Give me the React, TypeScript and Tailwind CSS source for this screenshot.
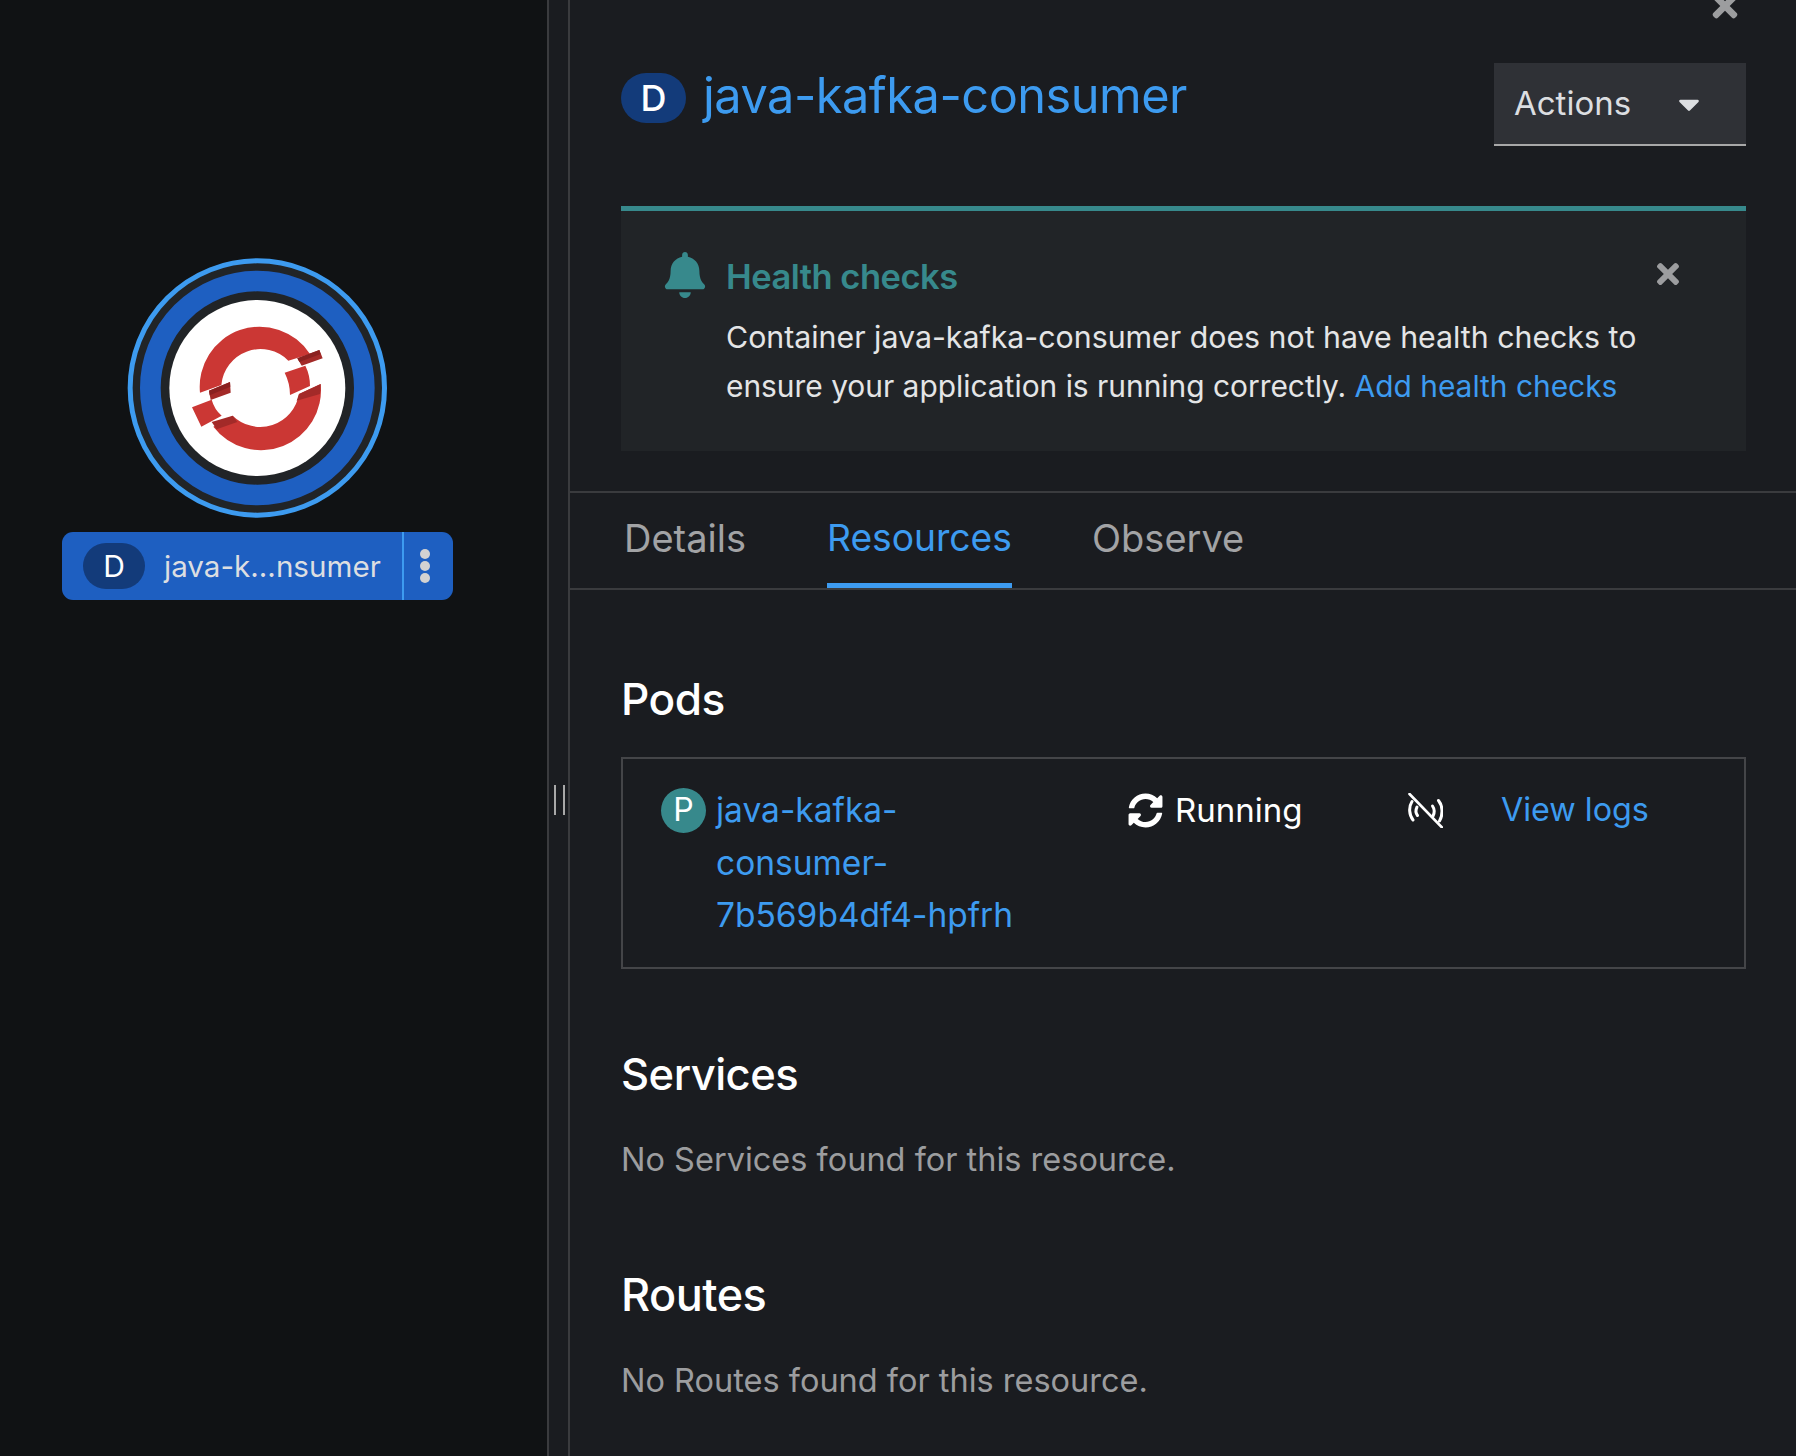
import { FaBell, FaCaretDown, FaSyncAlt, FaTimes } from "react-icons/fa";

function TopologyNode() {
  return (
    <svg width="280" height="280" viewBox="0 0 840 840" className="ml-[58px] block self-start">
      <circle cx="412" cy="414" r="381.5" fill="#212427" stroke="#3d9bf0" strokeWidth="15" />
      <circle cx="412" cy="414" r="321" fill="none" stroke="#1e5fc1" strokeWidth="62" />
      <circle cx="412" cy="414" r="264" fill="#fff" />
      <path d="M240 428 A180 180 0 0 1 570 312 L505 332 A118 118 0 0 0 304 405 Z" fill="#cb3734" />
      <path d="M602 402 A180 180 0 0 1 280 530 L338 497 A118 118 0 0 0 537 432 Z" fill="#cb3734" />
      <path d="M494 368 L556 347 Q570 375 570 408 L510 435 Q510 400 494 368 Z" fill="#cb3734" />
      <path d="M216 472 L275 449 Q283 478 305 497 L244 530 Z" fill="#cb3734" />
      <path d="M267 422 L330 396 L332 428 L272 450 Z" fill="#a32a28" />
      <path d="M267 422 L330 396 L331 410 L269 436 Z" fill="#8a2120" />
      <path d="M532 325 L598 300 L608 325 L545 347 Z" fill="#a32a28" />
      <path d="M532 325 L598 300 L602 312 L538 336 Z" fill="#8a2120" />
      <path d="M537 432 L602 402 L600 432 L530 452 Z" fill="#a32a28" />
      <path d="M275 516 L338 497 L352 516 L290 538 Z" fill="#a32a28" />
    </svg>
  );
}

function UnreachableIcon() {
  return (
    <svg width="35" height="35" viewBox="0 0 35 35" fill="none" stroke="#fff" strokeLinecap="round" className="block">
      <path d="M1.5 1 L34 34.5" strokeWidth="2.6" />
      <path d="M4 8.5 C0.5 14 1 22 5 27" strokeWidth="3" />
      <path d="M9 14 C7.5 17 8 20.5 9.5 22.5" strokeWidth="3" />
      <path d="M30.5 7.5 C35 13 35 22 31.5 28" strokeWidth="3" />
      <path d="M24.5 13 C26.5 16 26.5 20 25 23" strokeWidth="3" />
    </svg>
  );
}

export default function App() {
  return (
    <div className="flex h-[1456px] w-[1796px] overflow-hidden bg-[#101214] font-['Inter',sans-serif] text-[32.5px] leading-[49px] text-[#d6d8db]">
      <div className="w-[547px] shrink-0 pl-[62px] pt-[250px]">
        <div className="flex w-[391px] flex-col items-center">
          <TopologyNode />
          <div className="mt-[2px] flex h-[68px] w-[391px] items-center rounded-[11px] bg-[#1e5fc1] pl-[21px]">
            <span className="flex h-[46px] w-[62px] items-center justify-center rounded-full bg-[#133b7a] text-[30px] text-white">D</span>
            <span className="ml-[19px] w-[238px] whitespace-nowrap text-[29.6px] text-[#dcdee1]">java-k...nsumer</span>
            <div className="flex h-[68px] flex-1 items-center border-l-2 border-[#3d9bf0] pl-[16px]">
              <div className="flex flex-col gap-[2px]">
                <span className="h-[10px] w-[10px] rounded-full bg-[#d2d2d2]" />
                <span className="h-[10px] w-[10px] rounded-full bg-[#d2d2d2]" />
                <span className="h-[10px] w-[10px] rounded-full bg-[#d2d2d2]" />
              </div>
            </div>
          </div>
        </div>
      </div>

      <div className="flex w-[23px] shrink-0 items-start gap-[7px] border-x-2 border-[#3a3b3e] bg-[#1a1c20] pl-[5px] pt-[785px]">
        <span className="h-[30px] w-[2px] bg-[#a8a8a8]" />
        <span className="h-[30px] w-[2px] bg-[#a8a8a8]" />
      </div>

      <div className="relative min-w-0 flex-1 bg-[#1a1c20]">
        <FaTimes className="absolute left-[1137px] top-[-12px] text-[36px] text-[#9c9d9f]" />

        <div className="pl-[51px] pr-[50px]">
          <div className="flex h-[206px] items-start justify-between">
            <div className="mt-[69px] flex items-center">
              <span className="mt-[4px] flex h-[50px] w-[65px] items-center justify-center rounded-full bg-[#133b7a] text-[36px] font-medium text-white">D</span>
              <span className="ml-[17px] whitespace-nowrap text-[48.7px] leading-[54px] tracking-[-0.5px] text-[#3d9bf0]">java-kafka-consumer</span>
            </div>
            <button className="mt-[63px] flex h-[83px] w-[252px] items-center justify-between border-b-2 border-[#a8a8a8] bg-[#2f3136] pl-[20px] pr-[40px] text-[33px] text-[#dcdee1]">
              Actions
              <FaCaretDown className="text-[34px] text-[#dcdee1]" />
            </button>
          </div>

          <div className="h-[245px] border-t-[5px] border-[#37898c] bg-[#212427] pl-[41px] pr-[64px]">
            <div className="flex items-start">
              <FaBell className="mt-[41px] text-[46px] text-[#37898c]" />
              <div className="ml-[18px] flex-1 pt-[42px]">
                <div className="flex items-center justify-between">
                  <span className="text-[34.5px] font-semibold leading-[48px] tracking-[-0.5px] text-[#37898c]">Health checks</span>
                  <FaTimes className="mb-[6px] mr-[-2px] text-[32px] text-[#9c9d9f]" />
                </div>
                <div className="mt-[12px] text-[#e4e5e6]">
                  <p className="whitespace-nowrap text-[30.3px]">Container java-kafka-consumer does not have health checks to</p>
                  <p className="whitespace-nowrap text-[29.9px]">
                    ensure your application is running correctly. <span className="text-[#3d9bf0]">Add health checks</span>
                  </p>
                </div>
              </div>
            </div>
          </div>
        </div>

        <div className="mt-[40px] flex h-[99px] border-y-2 border-[#3a3b3e] pl-[54px] text-[38px] leading-[90px] text-[#a2a3a5]">
          <span className="w-[203px]">Details</span>
          <span className="h-[95px] w-[185px] border-b-[5px] border-[#3d9bf0] text-[37.2px] text-[#3d9bf0]">Resources</span>
          <span className="ml-[80px]">Observe</span>
        </div>

        <div className="pl-[51px] pr-[50px]">
          <h2 className="mt-[81px] text-[44.2px] font-medium leading-[56px] tracking-[-0.5px] text-white">Pods</h2>
          <div className="mt-[30px] flex h-[212px] border-2 border-[#444548] pl-[38px] pt-[25px] text-[33.5px] leading-[52.5px]">
            <span className="mt-[4px] flex h-[45px] w-[45px] shrink-0 items-center justify-center rounded-full bg-[#37898c] text-[32px] text-white">P</span>
            <span className="ml-[10px] w-[412px] shrink-0 text-[#3d9bf0]">
              java-kafka-
              <br />
              consumer-
              <br />
              7b569b4df4-hpfrh
            </span>
            <div className="flex h-[52px] w-[280px] shrink-0 items-center text-[33px] text-white">
              <FaSyncAlt className="text-[35px]" />
              <span className="ml-[12px]">Running</span>
            </div>
            <div className="flex h-[52px] w-[93px] shrink-0 items-center">
              <UnreachableIcon />
            </div>
            <span className="whitespace-nowrap text-[32.3px] text-[#3d9bf0]">View logs</span>
          </div>

          <h2 className="mt-[77px] text-[43.5px] font-medium leading-[56px] tracking-[-0.5px] text-white">Services</h2>
          <p className="mt-[33px] text-[#9c9d9f]">No Services found for this resource.</p>
          <h2 className="mt-[83px] text-[45px] font-medium leading-[56px] tracking-[-0.5px] text-white">Routes</h2>
          <p className="mt-[33px] text-[#9c9d9f]">No Routes found for this resource.</p>
        </div>
      </div>
    </div>
  );
}
